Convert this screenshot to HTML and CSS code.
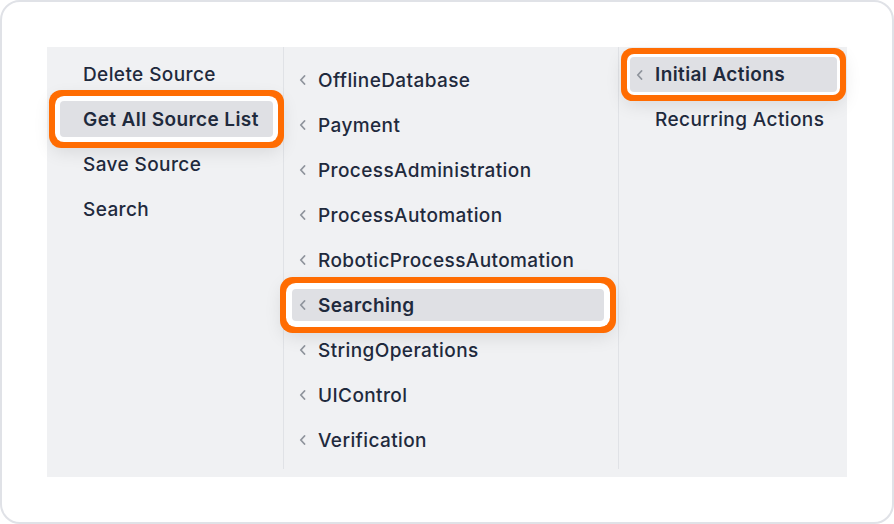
FILE: index.html
```html
<!DOCTYPE html>
<html>
<head>
<meta charset="utf-8">
<link rel="stylesheet" href="styles.css">
</head>
<body>
<div class="card">
  <div class="panel">
    <div class="col col1">
      <div class="item">Delete Source</div>
      <div class="item selected">Get All Source List</div>
      <div class="item">Save Source</div>
      <div class="item">Search</div>
    </div>
    <div class="col col2">
      <div class="item"><svg class="chev" viewBox="0 0 7 10"><path d="M5.5 1 L1.8 5 L5.5 9"/></svg>OfflineDatabase</div>
      <div class="item"><svg class="chev" viewBox="0 0 7 10"><path d="M5.5 1 L1.8 5 L5.5 9"/></svg>Payment</div>
      <div class="item"><svg class="chev" viewBox="0 0 7 10"><path d="M5.5 1 L1.8 5 L5.5 9"/></svg>ProcessAdministration</div>
      <div class="item"><svg class="chev" viewBox="0 0 7 10"><path d="M5.5 1 L1.8 5 L5.5 9"/></svg>ProcessAutomation</div>
      <div class="item"><svg class="chev" viewBox="0 0 7 10"><path d="M5.5 1 L1.8 5 L5.5 9"/></svg>RoboticProcessAutomation</div>
      <div class="item selected"><svg class="chev" viewBox="0 0 7 10"><path d="M5.5 1 L1.8 5 L5.5 9"/></svg>Searching</div>
      <div class="item"><svg class="chev" viewBox="0 0 7 10"><path d="M5.5 1 L1.8 5 L5.5 9"/></svg>StringOperations</div>
      <div class="item"><svg class="chev" viewBox="0 0 7 10"><path d="M5.5 1 L1.8 5 L5.5 9"/></svg>UIControl</div>
      <div class="item"><svg class="chev" viewBox="0 0 7 10"><path d="M5.5 1 L1.8 5 L5.5 9"/></svg>Verification</div>
    </div>
    <div class="col col3">
      <div class="item selected"><svg class="chev" viewBox="0 0 7 10"><path d="M5.5 1 L1.8 5 L5.5 9"/></svg>Initial Actions</div>
      <div class="item"><span class="chev-space"></span>Recurring Actions</div>
    </div>
  </div>
</div>
</body>
</html>
```

FILE: styles.css
```css
* { box-sizing: border-box; }
html, body { margin: 0; padding: 0; background: #ffffff; }
body {
  width: 894px;
  height: 524px;
  font-family: Inter, "Noto Sans", "Liberation Sans", sans-serif;
  color: #1f2a3d;
}
.card {
  width: 894px;
  height: 524px;
  border: 2px solid #e0e2e7;
  border-radius: 20px;
  padding: 45px;
  background: #ffffff;
}
.panel {
  width: 800px;
  height: 430px;
  background: #f0f1f3;
  display: flex;
  align-items: stretch;
  padding-bottom: 8px;
}
.col {
  display: flex;
  flex-direction: column;
}
.col1 {
  width: 237px;
  border-right: 1px solid #e0e2e6;
  padding: 9px 10px 0 13px;
  gap: 9px;
  --ring: 5px;
}
.col2 {
  width: 335px;
  border-right: 1px solid #e0e2e6;
  padding: 17px 14px 0 8px;
  gap: 13px;
  --ring: 6px;
}
.col3 {
  flex: 1;
  padding: 10px 10px 0 11px;
  gap: 10px;
  --ring: 3px;
}
.item {
  display: flex;
  align-items: center;
  font-size: 19px;
  font-weight: 500;
  letter-spacing: 0.4px;
  border-radius: 4px;
  white-space: nowrap;
}
.col1 .item { height: 36px; padding-left: 23px; }
.col2 .item { height: 32px; padding-left: 7px; }
.col3 .item { height: 35px; padding-left: 6px; }
.chev {
  width: 7px;
  height: 10px;
  margin-right: 12px;
  flex: none;
}
.chev path {
  fill: none;
  stroke: #8f949c;
  stroke-width: 1.8;
  stroke-linecap: round;
  stroke-linejoin: round;
}
.chev-space {
  display: inline-block;
  width: 7px;
  margin-right: 12px;
}
.item.selected {
  background: #dfe0e4;
  font-weight: 600;
  position: relative;
  box-shadow: 0 0 0 var(--ring) #ffffff,
              0 0 0 calc(var(--ring) + 6px) #ff6c02,
              0 6px 18px calc(var(--ring) + 4px) rgba(0, 0, 0, 0.10);
}
```
